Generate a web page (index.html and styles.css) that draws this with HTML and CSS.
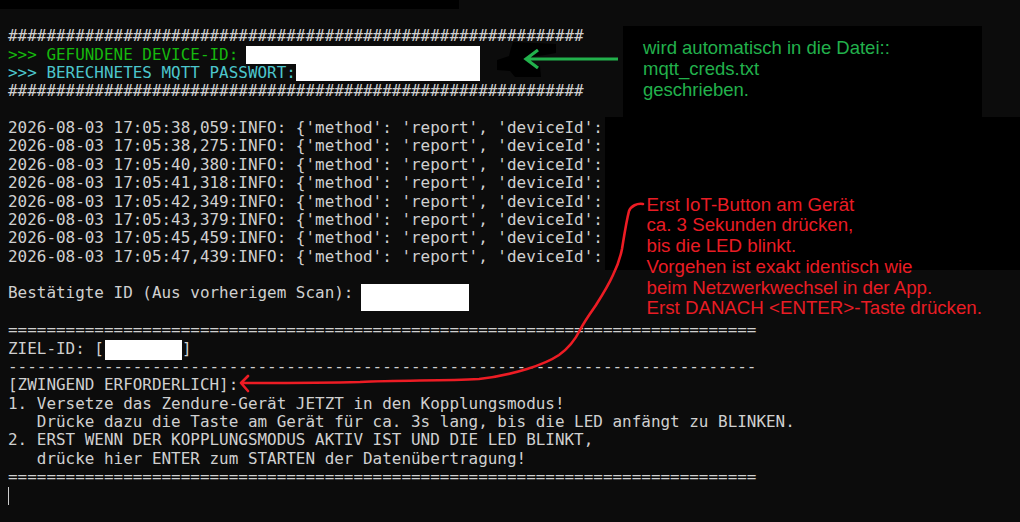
FILE: index.html
```html
<!DOCTYPE html>
<html lang="de">
<head>
<meta charset="utf-8">
<title>Terminal</title>
<link rel="stylesheet" href="styles.css">
</head>
<body>
<div class="strip"></div>
<pre class="term"><span class="line">############################################################</span>
<span class="line green">&gt;&gt;&gt; GEFUNDENE DEVICE-ID: <span class="redact r-device"></span></span>
<span class="line cyan">&gt;&gt;&gt; BERECHNETES MQTT PASSWORT:<span class="redact r-pass"></span></span>
<span class="line">############################################################</span>

<span class="line">2026-08-03 17:05:38,059:INFO: {'method': 'report', 'deviceId':</span>
<span class="line">2026-08-03 17:05:38,275:INFO: {'method': 'report', 'deviceId':</span>
<span class="line">2026-08-03 17:05:40,380:INFO: {'method': 'report', 'deviceId':</span>
<span class="line">2026-08-03 17:05:41,318:INFO: {'method': 'report', 'deviceId':</span>
<span class="line">2026-08-03 17:05:42,349:INFO: {'method': 'report', 'deviceId':</span>
<span class="line">2026-08-03 17:05:43,379:INFO: {'method': 'report', 'deviceId':</span>
<span class="line">2026-08-03 17:05:45,459:INFO: {'method': 'report', 'deviceId':</span>
<span class="line">2026-08-03 17:05:47,439:INFO: {'method': 'report', 'deviceId':</span>

<span class="line">Bestätigte ID (Aus vorherigem Scan): <span class="redact r-confirmed"></span></span>

<span class="line">==============================================================================</span>
<span class="line">ZIEL-ID: [<span class="redact r-target"></span>]</span>
<span class="line">------------------------------------------------------------------------------</span>
<span class="line">[ZWINGEND ERFORDERLICH]:</span>
<span class="line">1. Versetze das Zendure-Gerät JETZT in den Kopplungsmodus!</span>
<span class="line">   Drücke dazu die Taste am Gerät für ca. 3s lang, bis die LED anfängt zu BLINKEN.</span>
<span class="line">2. ERST WENN DER KOPPLUNGSMODUS AKTIV IST UND DIE LED BLINKT,</span>
<span class="line">   drücke hier ENTER zum STARTEN der Datenübertragung!</span>
<span class="line">==============================================================================</span>
<span class="cursor"></span></pre>

<div class="note-green">wird automatisch in die Datei::<br>mqtt_creds.txt<br>geschrieben.</div>
<div class="cover"></div>
<div class="note-red">Erst IoT-Button am Gerät<br>ca. 3 Sekunden drücken,<br>bis die LED blinkt.<br>Vorgehen ist exakt identisch wie<br>beim Netzwerkwechsel in der App.<br>Erst DANACH &lt;ENTER&gt;-Taste drücken.</div>

<svg class="marks" width="1020" height="522" viewBox="0 0 1020 522" xmlns="http://www.w3.org/2000/svg">
  <path class="blob" d="M513,42 L556,44 L556,53 L545,55 L531,57 L527,62 L540,66 L541,77 L515,77 L510,71 L497,70 L497,60 L509,56 L511,48 Z"/>
  <path class="garrow" d="M618,59 L526,59 M538,50 L526,59 L538,68"/>
  <path class="rarrow" d="M643,204 C637,203 631,206 629,211 C626,223 624,237 622,249 C620,259 617,267 613,275 C609,284 603,294 596,305 C589,315 584,322 580,330 C575,340 569,348 559,355 C550,361 540,365 527,369 C514,373 499,377 479,379 C440,381 400,380 360,382 C320,383 280,383 242,383 M248,376 L241,383 L248,391"/>
</svg>
</body>
</html>
```

FILE: styles.css
```css
html, body {
  margin: 0;
  padding: 0;
}

body {
  width: 1020px;
  height: 522px;
  overflow: hidden;
  background: #0c0c0c;
  position: relative;
}

.strip {
  width: 459px;
  height: 9px;
  background: #000;
}

.term {
  margin: 0;
  padding: 18.2px 0 0 8px;
  font-family: "DejaVu Sans Mono", monospace;
  font-size: 15.94px;
  line-height: 18.375px;
  color: #d0d0d0;
  white-space: pre;
}

.green {
  color: #16b80e;
}

.cyan {
  color: #4cc6cc;
}

.redact {
  display: inline-block;
  vertical-align: top;
  background: #ffffff;
}

.r-device {
  width: 234px;
  height: 18px;
  margin-left: -2px;
}

.r-pass {
  width: 184px;
  height: 17px;
}

.r-confirmed {
  width: 108px;
  height: 27px;
  margin-left: -2px;
  margin-bottom: -9px;
}

.r-target {
  width: 77px;
  height: 20px;
  margin-left: 1px;
  margin-bottom: -2px;
}

.cursor {
  display: inline-block;
  vertical-align: top;
  width: 1px;
  height: 18px;
  background: #cccccc;
}

.note-green {
  position: absolute;
  left: 623px;
  top: 26px;
  width: 339px;
  height: 80.5px;
  padding: 10.5px 0 0 20px;
  background: #000;
  color: #22b14c;
  font-family: "Liberation Sans", Arial, sans-serif;
  font-size: 18.5px;
  line-height: 21.3px;
}

.cover {
  position: absolute;
  left: 605px;
  top: 117px;
  width: 415px;
  height: 153px;
  background: #000;
}

.note-red {
  position: absolute;
  left: 646.5px;
  top: 194.5px;
  color: #e91c24;
  font-family: "Liberation Sans", Arial, sans-serif;
  font-size: 18.7px;
  line-height: 20.8px;
  white-space: nowrap;
}

.marks {
  position: absolute;
  left: 0;
  top: 0;
  pointer-events: none;
}

.blob {
  fill: #000;
}

.garrow {
  fill: none;
  stroke: #22b14c;
  stroke-width: 3.2;
  stroke-linecap: butt;
  stroke-linejoin: miter;
}

.rarrow {
  fill: none;
  stroke: #ed1c24;
  stroke-width: 2.6;
  stroke-linecap: round;
  stroke-linejoin: round;
}
```
